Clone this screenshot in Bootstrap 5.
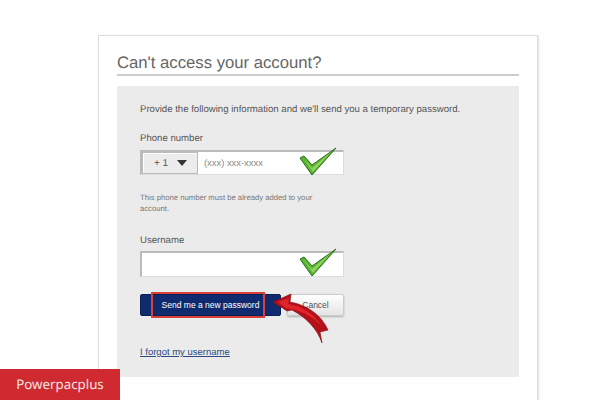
<!DOCTYPE html>
<html lang="en">
<head>
    <meta charset="UTF-8">
    <meta name="viewport" content="width=device-width, initial-scale=1.0">
    <title>Can't access your account?</title>
    <link href="https://cdn.jsdelivr.net/npm/bootstrap@5.3.0/dist/css/bootstrap.min.css" rel="stylesheet">
    <style>
        html, body { height: 400px; overflow: hidden; }
        body { font-family: "Liberation Sans", Arial, sans-serif; color: #555; background: #fff; position: relative; text-rendering: geometricPrecision; }

        .page-card {
            width: 440px; height: 365px; margin: 35px 0 0 98px;
            padding: 15px 18px 0 18px;
            border: 1px solid #ddd; border-bottom: 0; box-shadow: 1px 1px 2px rgba(0,0,0,.12);
        }
        .page-title {
            font-size: 16.7px; line-height: 23px; font-weight: 400; color: #666; margin: 0;
            border-bottom: 2px solid #ccc;
        }
        .grey-panel { background: #ebebeb; margin-top: 10px; height: 291px; padding: 17px 23px 0; }
        .intro { font-size: 9.6px; line-height: 14px; margin: 0 0 15px; color: #555; }
        .field-label { font-size: 9.6px; line-height: 14px; margin-bottom: 4px; color: #555; }
        .label-user { margin-top: 20px; margin-bottom: 3px; }

        .field-box {
            width: 204px; height: 26px; background: #fff;
            border: 1px solid #ddd; border-top: 2px solid #bbb; border-left: 2px solid #bbb;
        }
        .field-phone { height: 25px; }
        .code-btn {
            width: 56px; height: 22px; background: #ececec; border: 1px solid #bbb; box-shadow: inset 1px 1px 0 #fff;
            font-size: 10px; color: #555; padding: 0 10px 0 11px;
        }
        .caret-down { width: 0; height: 0; border-left: 5px solid transparent; border-right: 5px solid transparent; border-top: 6px solid #333; }
        .phone-hint { font-size: 9.4px; color: #888; margin-left: 6px; }
        .help-text { font-size: 7.7px; line-height: 11px; color: #777; width: 190px; margin: 17px 0 0; }

        .btn-row { margin-top: 17px; column-gap: 6px; }
        .action-btn { height: 22px; font-size: 8.5px; line-height: 20px; padding: 0; border-radius: 2px; }
        .send-btn { width: 141px; background: #0f2a6e; color: #fff; border: 1px solid #0b1f55; position: relative; }
        .send-btn:hover { background: #0f2a6e; color: #fff; }
        .send-btn::after {
            content: ""; position: absolute; left: 10px; right: 15px; top: -3px; bottom: -3px;
            border: 2px solid #d8403a;
        }
        .cancel-btn { width: 57px; background: linear-gradient(#fff, #e4e4e4); color: #555; border: 1px solid #ccc; box-shadow: 0 1px 2px rgba(0,0,0,.25); }
        .forgot-link { display: block; font-size: 9.5px; line-height: 14px; color: #2c4a80; margin-top: 30px; }

        .check-mark { position: absolute; left: 299px; width: 38px; height: 29px; }
        .check-phone { top: 147px; }
        .check-user { top: 248px; }
        .red-arrow { position: absolute; left: 270px; top: 290px; width: 60px; height: 56px; }
        .brand-tag {
            position: absolute; left: 0; bottom: 0; width: 120px; height: 31px; background: #ce2a30; color: #f7e5e5;
            font-family: "Noto Sans", sans-serif; font-size: 13.3px;
        }
    </style>
</head>

<body>
    <div class="page-card">
        <h1 class="page-title">Can't access your account?</h1>
        <div class="grey-panel">
            <p class="intro">Provide the following information and we'll send you a temporary password.</p>

            <div class="field-label">Phone number</div>
            <div class="field-box field-phone d-flex align-items-center">
                <div class="code-btn d-flex align-items-center justify-content-between">
                    <span>+ 1</span>
                    <span class="caret-down"></span>
                </div>
                <span class="phone-hint">(xxx) xxx-xxxx</span>
            </div>
            <p class="help-text">This phone number must be already added to your account.</p>

            <div class="field-label label-user">Username</div>
            <div class="field-box"></div>

            <div class="btn-row d-flex">
                <button type="button" class="btn action-btn send-btn">Send me a new password</button>
                <button type="button" class="btn action-btn cancel-btn">Cancel</button>
            </div>

            <a href="#" class="forgot-link">I forgot my username</a>
        </div>
    </div>

    <!-- green ticks sit over the fields -->
    <svg class="check-mark check-phone" viewBox="0 0 38 29">
        <path d="M13 28 L1 11 L5 9 L13 18 L37 1 Z" fill="#55b52f" stroke="#2f6b1e" stroke-width="1" stroke-linejoin="round"/>
        <path d="M4 11 L13 21 L33 4 L14 25 Z" fill="#8fd45a"/>
    </svg>
    <svg class="check-mark check-user" viewBox="0 0 38 29">
        <path d="M13 28 L1 11 L5 9 L13 18 L37 1 Z" fill="#55b52f" stroke="#2f6b1e" stroke-width="1" stroke-linejoin="round"/>
        <path d="M4 11 L13 21 L33 4 L14 25 Z" fill="#8fd45a"/>
    </svg>

    <svg class="red-arrow" viewBox="0 0 60 56">
        <path d="M3 12 L21 4 L20 12 C38 15 52 26 58 40 L50 42 L52 53 C48 40 36 27 22 20 L17 21 Z" fill="#b5101a" stroke="#7d0a12" stroke-width=".6"/>
        <path d="M8 12 L19 8 L18 14 C32 16 44 24 52 36 C42 26 30 20 16 18 Z" fill="#e0242c"/>
    </svg>

    <div class="brand-tag d-flex align-items-center justify-content-center">Powerpacplus</div>

    <script src="https://cdn.jsdelivr.net/npm/bootstrap@5.3.0/dist/js/bootstrap.bundle.min.js"></script>
</body>
</html>
